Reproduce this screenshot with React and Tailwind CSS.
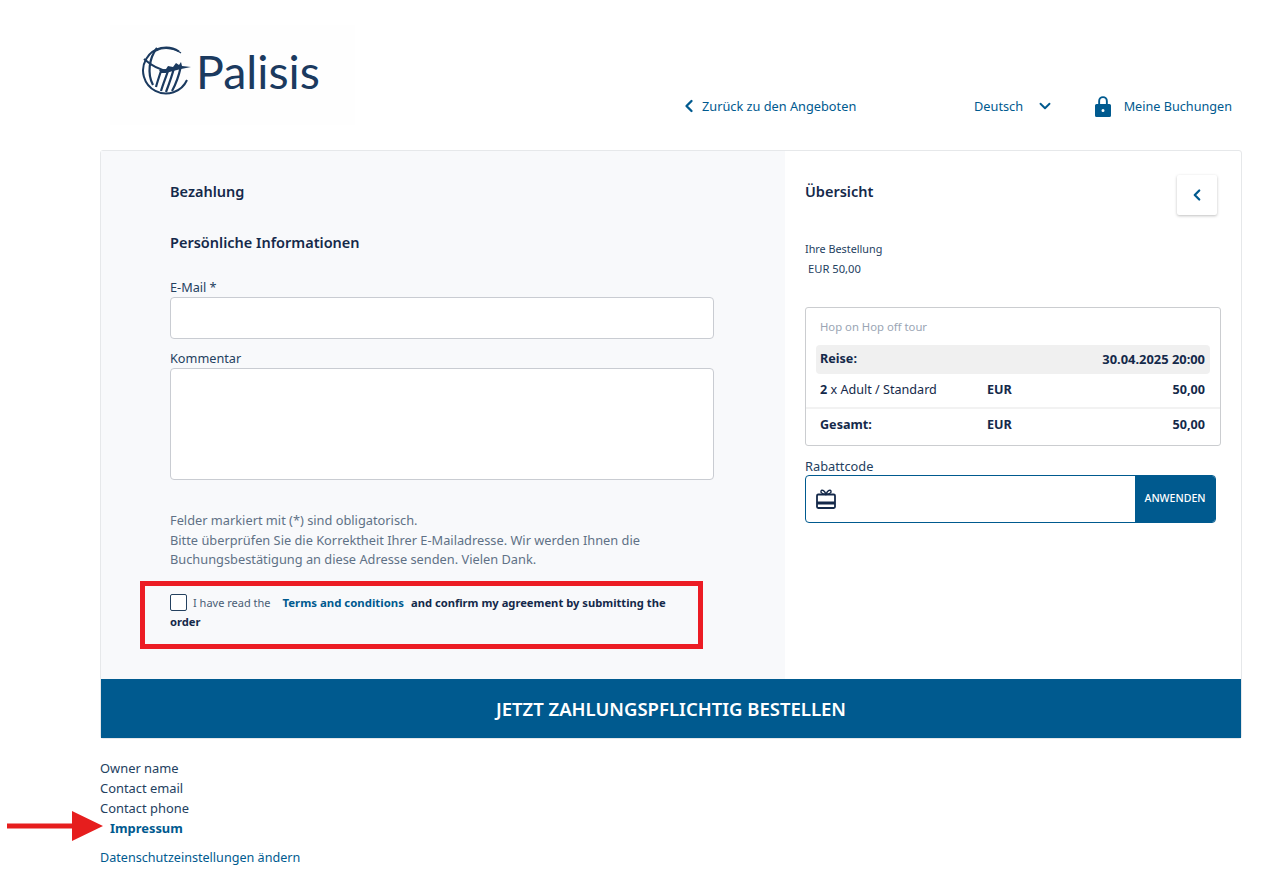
import { ChevronLeft, ChevronDown } from "lucide-react";

const font = { fontFamily: '"Noto Sans", sans-serif' };

function Logo() {
  return (
    <div className="w-[245px] h-[100px] bg-[#fefefe] flex items-center pl-[32px] pb-[8px] gap-[5px] shrink-0">
      <svg viewBox="0 0 50 50" className="w-[50px] h-[50px] shrink-0 -ml-[1px]" fill="none" stroke="#1b3a5f">
        <path d="M38 5.500A23 23 0 1 0 46 34" strokeWidth="2" />
        <path d="M3 13 C11 20 19 24 27 25" strokeWidth="2" />
        <path d="M16 2 C8 12 6 28 12 39" strokeWidth="2.200" />
        <path d="M15 5 C22 1 33 2 40 7" strokeWidth="1.200" />
        <path d="M20 25 C18 31 16 37 15 41" strokeWidth="2.200" />
        <path d="M27 25 C25 31 22 38 20 45" strokeWidth="2.200" />
        <path d="M33 22 C31 30 28 38 25 46" strokeWidth="2.200" />
        <path d="M40 20 C38 29 35 38 31 45" strokeWidth="2.200" />
        <path d="M18 24 L25 23 L27 20 L32 21 L35 17 L38 19 L40 16 L41 20 L50 21 L40 23 L32 25 L25 27 L20 27 Z" fill="#1b3a5f" stroke="none" />
      </svg>
      <span className="text-[46.500px] leading-none text-[#1b3a5f]" style={{ fontFamily: "Lato, sans-serif" }}>
        Palisis
      </span>
    </div>
  );
}

function Header() {
  return (
    <header className="h-[150px] flex pl-[110px] pr-[48px] pt-[25px]">
      <Logo />
      <nav className="flex-1 flex items-start pt-[69px] text-[12.750px] leading-[24px] text-[#005a8f] whitespace-nowrap">
        <a className="flex items-center ml-[324px] w-[295px]">
          <ChevronLeft className="w-[20px] h-[20px] mr-[3px]" strokeWidth={2.800} />
          Zurück zu den Angeboten
        </a>
        <a className="flex items-center w-[120px]">
          Deutsch
          <ChevronDown className="w-[18px] h-[18px] ml-[13px]" strokeWidth={2.500} />
        </a>
        <a className="flex items-center ml-auto text-[12.650px]">
          <svg viewBox="0 0 16 22" className="w-[16px] h-[22px] mr-[13px] shrink-0" fill="#005a8f">
            <path d="M3.200 9V6a4.800 4.800 0 0 1 9.600 0v3h-1.900V6a2.900 2.900 0 0 0-5.800 0v3z" />
            <path fillRule="evenodd" d="M1.500 9h13A1.500 1.500 0 0 1 16 10.500V20.500A1.500 1.500 0 0 1 14.500 22h-13A1.500 1.500 0 0 1 0 20.500V10.500A1.500 1.500 0 0 1 1.500 9zM8 14a1.500 1.500 0 1 0 0 3 1.500 1.500 0 0 0 0-3z" />
          </svg>
          Meine Buchungen
        </a>
      </nav>
    </header>
  );
}

function LeftPanel() {
  return (
    <section className="w-[684px] shrink-0 bg-[#f8f9fb] pl-[69px] pr-[71px] pt-[29px] h-[528px]">
      <h2 className="text-[14.500px] leading-[22px] font-semibold text-[#14294a]">Bezahlung</h2>
      <h3 className="text-[14.500px] leading-[22px] font-semibold text-[#14294a] mt-[29px]">Persönliche Informationen</h3>

      <label className="block text-[12.700px] leading-[20px] text-[#24415f] mt-[24px]">E-Mail *</label>
      <input className="block w-full h-[42px] bg-white border border-[#c9ccd2] rounded-[4px]" />

      <label className="block text-[12.700px] leading-[20px] text-[#24415f] mt-[9px]">Kommentar</label>
      <textarea className="block w-full h-[112px] bg-white border border-[#c9ccd2] rounded-[4px] resize-none" />

      <p className="mt-[31px] text-[12.800px] leading-[19.500px] text-[#5f7186] whitespace-nowrap">
        Felder markiert mit (*) sind obligatorisch.
        <br />
        Bitte überprüfen Sie die Korrektheit Ihrer E-Mailadresse. Wir werden Ihnen die
        <br />
        Buchungsbestätigung an diese Adresse senden. Vielen Dank.
      </p>

      <div className="mt-[23px] text-[11px] leading-[19px] text-[#14294a] relative whitespace-nowrap">
        <span className="inline-block w-[17px] h-[17px] border border-[#24415f] rounded-[2px] bg-white align-[-4px] mr-[6px]" />
        <span className="text-[#4a5d75]">I have read the</span>
        <a className="font-bold text-[#005a8f] ml-[12px] text-[11.400px]">Terms and conditions</a>
        <span className="font-bold ml-[7px] text-[11.200px]">and confirm my agreement by submitting the</span>
        <br />
        <span className="font-bold text-[11.200px]">order</span>
        <div className="absolute -left-[30px] -top-[12px] w-[563px] h-[68px] border-[5px] border-[#ec1c24] pointer-events-none" />
      </div>
    </section>
  );
}

function OrderTable() {
  return (
    <div className="mt-[28px] w-[416px] h-[139px] border border-[#cbcdd0] rounded-[3px] text-[12.600px] text-[#14294a]">
      <p className="pl-[14px] pt-[10px] leading-[18px] text-[11.300px] text-[#9aa5b4]">Hop on Hop off tour</p>
      <div className="mx-[10px] mt-[9px] h-[29px] bg-[#f0f0f0] rounded-[4px] flex items-center justify-between pl-[4px] pr-[5px] font-bold">
        <span>Reise:</span>
        <span className="text-[12.900px]">30.04.2025 20:00</span>
      </div>
      <div className="h-[35px] grid grid-cols-[167px_1fr_auto] items-center pl-[14px] pr-[15px] border-b-2 border-[#f2f2f2]">
        <span><b>2</b> x Adult / Standard</span>
        <b>EUR</b>
        <b>50,00</b>
      </div>
      <div className="h-[33px] grid grid-cols-[167px_1fr_auto] items-center pl-[14px] pr-[15px] font-bold">
        <span>Gesamt:</span>
        <span>EUR</span>
        <span>50,00</span>
      </div>
    </div>
  );
}

function RightPanel() {
  return (
    <aside className="flex-1 relative pl-[20px] pt-[29px]">
      <h2 className="text-[14.500px] leading-[22px] font-semibold text-[#14294a]">Übersicht</h2>
      <button className="absolute left-[392px] top-[24px] w-[40px] h-[40px] bg-white shadow-[0_1px_3px_rgba(0,0,0,0.25)] rounded-[2px] flex items-center justify-center text-[#005a8f]">
        <ChevronLeft className="w-[18px] h-[18px]" strokeWidth={3} />
      </button>
      <p className="mt-[37px] text-[10.800px] leading-[20px] text-[#24415f]">Ihre Bestellung</p>
      <p className="ml-[3px] text-[11.200px] leading-[20px] text-[#24415f]">EUR 50,00</p>
      <OrderTable />
      <label className="block mt-[11px] text-[12.800px] leading-[18px] text-[#24415f]">Rabattcode</label>
      <div className="w-[411px] h-[48px] border border-[#005a8f] rounded-[4px] flex overflow-hidden bg-white">
        <div className="flex-1 flex items-center pl-[10px]">
          <svg viewBox="0 0 20 20" className="w-[20px] h-[20px]" fill="none" stroke="#14294a" strokeWidth="1.800">
            <rect x="1" y="5.500" width="18" height="13.500" rx="1.200" />
            <path d="M1 14h18" strokeWidth="3" />
            <path d="M10 5.500C9 2 6 0 5 2c-.8 1.800 2 3 5 3.500zM10 5.500C11 2 14 0 15 2c.8 1.800-2 3-5 3.500z" strokeWidth="1.400" />
          </svg>
        </div>
        <button className="w-[80px] bg-[#005a8f] text-white text-[10.600px] font-medium">ANWENDEN</button>
      </div>
    </aside>
  );
}

export default function App() {
  return (
    <div className="bg-white h-[874px] overflow-hidden" style={font}>
      <Header />
      <main className="ml-[100px] w-[1142px] border border-[#e6e8ea] rounded-[3px] bg-white">
        <div className="flex">
          <LeftPanel />
          <RightPanel />
        </div>
        <button className="block w-full h-[59px] bg-[#005a8f] text-white text-[18.500px] font-semibold">
          JETZT ZAHLUNGSPFLICHTIG BESTELLEN
        </button>
      </main>
      <footer className="ml-[100px] mt-[19px] text-[12.900px] leading-[20px] text-[#24415f] relative">
        <p>Owner name</p>
        <p>Contact email</p>
        <p>Contact phone</p>
        <a className="block ml-[10px] font-bold text-[#005a8f]">Impressum</a>
        <a className="block mt-[10px] text-[12.600px] text-[#005a8f]">Datenschutzeinstellungen ändern</a>
        <svg viewBox="0 0 96 30" className="absolute -left-[93px] top-[53px] w-[96px] h-[30px]" fill="#e61e1e">
          <path d="M0 12.500h65V0l31 15-31 15V17.500H0z" />
        </svg>
      </footer>
    </div>
  );
}
